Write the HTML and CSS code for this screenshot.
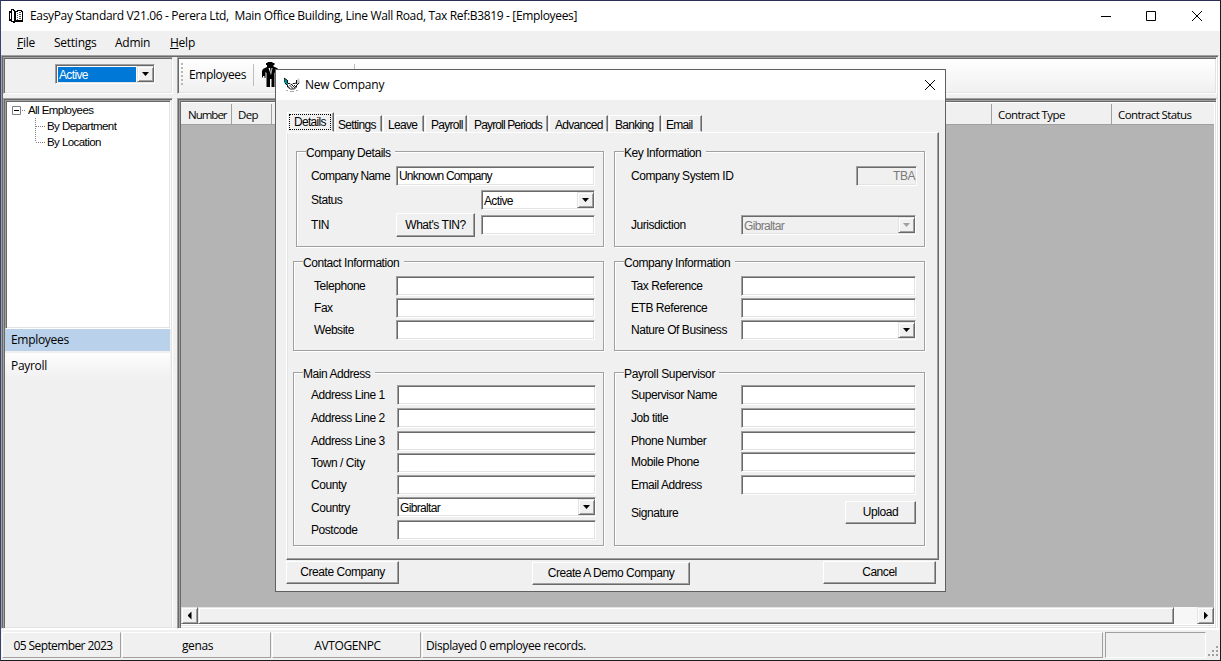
FILE: index.html
```html
<!DOCTYPE html>
<html lang="en">
<head>
<meta charset="utf-8">
<title>EasyPay Standard</title>
<link rel="stylesheet" href="styles.css">
</head>
<body>
<div class="app">
  <header class="titlebar">
    <svg class="app-icon" width="16" height="16" viewBox="0 0 16 16" fill="none" stroke="#000" shape-rendering="crispEdges"><path d="M1 3h2v10H1z" fill="#000" stroke="none"/><path d="M2 5h1v6H2z" fill="#fff" stroke="none"/><path d="M3.500 1.500h2v1h1v12h-1v-1h-2zM7.500 3.500h2v-1h4v1h1v9h-7z"/><path d="M7 13h8v1H7zM14 4h1v10h-1z" fill="#000" stroke="none"/><path d="M9 5.500h1M11 4.500h2M9 7.500h1M11 6.500h2M9 9.500h1M11 8.500h2M9 11.500h1M11 10.500h2" stroke="#555"/></svg>
    <span class="title-text">EasyPay Standard V21.06 - Perera Ltd,&nbsp; Main Office Building, Line Wall Road, Tax Ref:B3819 - [Employees]</span>
    <svg class="win-min" width="12" height="12" viewBox="0 0 12 12" stroke="#000" fill="none"><path d="M1 6.500h10"/></svg>
    <svg class="win-max" width="12" height="12" viewBox="0 0 12 12" stroke="#000" fill="none"><path d="M1.500 1.500h9v9h-9z"/></svg>
    <svg class="win-close" width="12" height="12" viewBox="0 0 12 12" stroke="#000" fill="none"><path d="M1 1l10 10M11 1L1 11"/></svg>
  </header>
  <nav class="menu"><span class="m1"><u>F</u>ile</span><span class="m2">Settings</span><span class="m3">Admin</span><span class="m4"><u>H</u>elp</span></nav>
  <main class="frame">
    <section class="pane filter"><div class="select filter-select"><span class="chosen">Active</span><i class="drop"></i></div></section>
    <section class="pane toolbar">
      <i class="grip"></i><span class="tool-label">Employees</span><i class="tsep"></i>
      <svg class="person" width="18" height="26" viewBox="0 0 18 26"><path d="M5.500 0h5v1h2v2h-1v1.500L15 6l2 2v7l-2 2h-1l-.5-7-1 1v14h-3v-8H8v8H4.500V11l-1-1v6H1L0 15V9l1-2 4-2V3H4V1h1.500z" fill="#000"/><path d="M6.500 6h4L9 13zM1 14h1.500v2H1zM14.500 14H16v2h-1.500z" fill="#fff"/><path d="M8 6h1.500L9 12z" fill="#000"/></svg>
      <i class="tsep second"></i>
    </section>
    <section class="pane nav">
      <div class="tree">
        <div class="node"><svg width="18" height="16" viewBox="0 0 18 16" fill="none"><path d="M2.500 4.500h8v8h-8z" stroke="#808080" fill="#fff"/><path d="M4 8.500h5" stroke="#000"/><path d="M12 8.500h4" stroke="#808080" stroke-dasharray="1 1"/></svg><span>All Employees</span></div>
        <div class="node child"><svg width="13" height="16" viewBox="0 0 13 16"><path d="M1.500 0v16M2 8.500h9" stroke="#808080" stroke-dasharray="1 1"/></svg><span>By Department</span></div>
        <div class="node child"><svg width="13" height="16" viewBox="0 0 13 16"><path d="M1.500 0v8M2 8.500h9" stroke="#808080" stroke-dasharray="1 1"/></svg><span>By Location</span></div>
      </div>
      <div class="nav-item active">Employees</div>
      <div class="nav-item plain">Payroll</div>
    </section>
    <section class="pane list">
      <div class="thead"><span class="c-num">Number</span><span class="c-dep">Dep</span><span class="c-mid"></span><span class="c-type">Contract Type</span><span class="c-status">Contract Status</span></div>
      <div class="scroll"><i class="arrow"></i><i class="thumb"></i><i class="track"></i><i class="arrow next"></i></div>
    </section>
  </main>
  <footer class="status"><span class="s1">05 September 2023</span><span class="s2">genas</span><span class="s3">AVTOGENPC</span><span class="s4">Displayed 0 employee records.</span><span class="s5"></span>
    <svg width="12" height="12" viewBox="0 0 12 12" fill="#a0a0a0"><path d="M8 1h2v2H8zM4 5h2v2H4zM8 5h2v2H8zM0 9h2v2H0zM4 9h2v2H4zM8 9h2v2H8z"/></svg>
  </footer>
</div>

<div class="dialog">
  <div class="dlg-title">
    <svg class="shake" width="16" height="16" viewBox="0 0 16 16"><path d="M0 1l4 3v4L2 8 0 5z" fill="#009090"/><path d="M12 4l3-3 1 5-3 2z" fill="#c8c8c8"/><path d="M0 1v4M1 6l2 2M0 1l3 2M3.500 3v3M4 6.500h2l1 1h1l1-1h2l1.500-1M12.500 3v4M4.500 9.500l1 1M5.500 8l3.500 3.500M8 8l3 3M10 8l2 2M3.500 8v2l3 2h4l2-2V8M13 8l2-2" fill="none" stroke="#000" stroke-width=".9"/><path d="M2 13.500h2M12 13.500h2M6 14.500h4" stroke="#aaa"/></svg>
    <span>New Company</span>
    <svg class="dlg-close" width="12" height="12" viewBox="0 0 12 12" stroke="#000" fill="none"><path d="M1 1l10 10M11 1L1 11"/></svg>
  </div>
  <div class="tabs"><span class="tab current"><b>Details</b></span><span class="tab t2">Settings</span><span class="tab t3">Leave</span><span class="tab t4">Payroll</span><span class="tab t5">Payroll Periods</span><span class="tab t6">Advanced</span><span class="tab t7">Banking</span><span class="tab t8">Email</span></div>
  <div class="sheet">
    <div class="col">
      <div class="group details"><div class="legend w98">Company Details</div>
        <div class="row"><label class="tight">Company Name</label><div class="field">Unknown Company</div></div>
        <div class="row g4"><label>Status</label><div class="select short"><span>Active</span><i class="drop"></i></div></div>
        <div class="row g5"><label>TIN</label><div class="btn tin">What's TIN?</div><div class="field short"></div></div>
      </div>
      <div class="group contact"><div class="legend w106">Contact Information</div>
        <div class="row"><label>Telephone</label><div class="field"></div></div>
        <div class="row g2"><label>Fax</label><div class="field"></div></div>
        <div class="row g2"><label>Website</label><div class="field"></div></div>
      </div>
      <div class="group address"><div class="legend w76">Main Address</div>
        <div class="row"><label>Address Line 1</label><div class="field"></div></div>
        <div class="row g3"><label>Address Line 2</label><div class="field"></div></div>
        <div class="row g3"><label>Address Line 3</label><div class="field"></div></div>
        <div class="row g2"><label>Town / City</label><div class="field"></div></div>
        <div class="row g2"><label>County</label><div class="field"></div></div>
        <div class="row g2"><label class="low">Country</label><div class="select"><span>Gibraltar</span><i class="drop"></i></div></div>
        <div class="row g3"><label>Postcode</label><div class="field"></div></div>
      </div>
    </div>
    <div class="col right">
      <div class="group key"><div class="legend w84">Key Information</div>
        <div class="row"><label>Company System ID</label><div class="field off tba">TBA</div></div>
        <div class="row g29"><label>Jurisdiction</label><div class="select off"><span>Gibraltar</span><i class="drop"></i></div></div>
      </div>
      <div class="group company"><div class="legend w112">Company Information</div>
        <div class="row"><label>Tax Reference</label><div class="field"></div></div>
        <div class="row g2"><label>ETB Reference</label><div class="field"></div></div>
        <div class="row g2"><label>Nature Of Business</label><div class="select"><i class="drop"></i></div></div>
      </div>
      <div class="group supervisor"><div class="legend w95">Payroll Supervisor</div>
        <div class="row"><label>Supervisor Name</label><div class="field"></div></div>
        <div class="row g3"><label>Job title</label><div class="field"></div></div>
        <div class="row g3"><label>Phone Number</label><div class="field"></div></div>
        <div class="row g1"><label>Mobile Phone</label><div class="field"></div></div>
        <div class="row g3"><label>Email Address</label><div class="field"></div></div>
        <div class="row g8"><label>Signature</label><div class="btn upload">Upload</div></div>
      </div>
    </div>
  </div>
  <div class="actions"><div class="btn create">Create Company</div><div class="btn demo">Create A Demo Company</div><div class="btn cancel">Cancel</div></div>
</div>
</body>
</html>
```
FILE: styles.css
```css
* { box-sizing: border-box; }
body {
  margin: 0; width: 1221px; height: 661px; overflow: hidden; position: relative;
  font: 12px/16px "Liberation Sans", Arial, sans-serif; letter-spacing: -0.45px; color: #000; white-space: nowrap;
}
i { display: block; font-style: normal; }
svg { display: block; flex: none; }

/* Main window */
.app {
  width: 1221px; height: 661px; background: #f0f0f0; border: 1px solid #1c1c1c; border-top-color: #28305a;
  border-left-color: #39446e; display: flex; flex-direction: column;
}
.titlebar, .menu, .tool-label, .nav-item, .status, .thead, .dlg-title {
  font-family: "Open Sans", "Noto Sans", sans-serif; letter-spacing: -0.25px;
}
.titlebar { height: 30px; flex: none; background: #fff; display: flex; align-items: center; padding-left: 7px; letter-spacing: -0.34px; }
.title-text { margin-left: 6px; width: 1070px; flex: none; }
.win-max { margin-left: 33px; }
.win-close { margin-left: 34px; }
.menu { height: 24px; flex: none; display: flex; align-items: center; padding-left: 16px; }
.menu span { flex: none; }
.m1 { width: 37px; } .m2 { width: 61px; } .m3 { width: 55px; }
.frame, .pane, .tree, .select, .field {
  border: 1px solid; border-color: #a0a0a0 #fff #fff #a0a0a0;
  box-shadow: inset 1px 1px #696969, inset -1px -1px #e3e3e3;
}
.frame {
  width: 1218px; height: 574px; flex: none; padding: 1px;
  display: grid; grid-template: 37px 531px / 170px 1040px; gap: 4px; align-content: start;
}
.pane { padding: 1px; }
.filter { padding: 6px 0 0 51px; }
.select, .field { height: 20px; width: 199px; flex: none; background: #fff; padding: 1px 1px 1px 2px; display: flex; align-items: center; }
.field { letter-spacing: -0.8px; }
.select { padding: 1px 0 1px 2px; letter-spacing: -0.65px; }
.select span { flex: 1; padding-top: 1px; }
.drop {
  width: 17px; height: 16px; margin-left: auto; flex: none; background: #f0f0f0; border: 1px solid; border-color: #e3e3e3 #696969 #696969 #e3e3e3;
  box-shadow: inset 1px 1px #fff, inset -1px -1px #a0a0a0; display: grid; place-items: center;
}
.drop::before { content: ""; width: 7px; height: 4px; background: #000; clip-path: polygon(0 0, 100% 0, 50% 100%); }
.filter-select { width: 100px; }
.filter-select .chosen { background: #0078d7; color: #fff; height: 15px; line-height: 15px; padding-left: 1px; margin-right: 1px; }
.toolbar { background: linear-gradient(#fff, #f0f0f0); display: flex; align-items: center; padding: 0 0 2px 3px; }
.grip { width: 2px; height: 23px; background: repeating-linear-gradient(#b8b8b8 0 2px, transparent 2px 4px); }
.tool-label { margin-left: 6px; width: 64px; letter-spacing: -.4px; }
.tsep { width: 1px; height: 22px; background: #bdbdbd; }
.person { margin-left: 8px; }
.second { margin-left: 74px; }

/* Left navigation */
.nav { display: flex; flex-direction: column; }
.tree { height: 229px; flex: none; background: #fff; padding: 1px 1px 1px 4px; font-size: 11.5px; letter-spacing: -.57px; }
.node { height: 16px; display: flex; align-items: center; }
.child { padding-left: 24px; }
.nav-item { height: 22px; flex: none; margin-right: 1px; padding: 3px 0 0 6px; letter-spacing: -.3px; }
.active { background: #b9d1ea; }
.plain { height: 26px; margin-top: 2px; padding-top: 5px; background: linear-gradient(#fdfdfd, #f0f0f0); }

/* Employee list */
.list {
  background: #b4b4b4; padding: 3px 2px 4px 3px; display: flex; flex-direction: column; justify-content: space-between;
  box-shadow: inset 1px 1px #696969, inset 2px 2px #a0a0a0, inset 3px 3px #696969,
    inset -1px -1px #e3e3e3, inset -2px -2px #fff, inset -2px -3px #e3e3e3, inset -2px -4px #fff;
}
.thead { display: flex; height: 23px; background: #f0f0f0; border-top: 1px solid #fff; border-bottom: 1px solid #a0a0a0; font-size: 11.5px; letter-spacing: -.6px; }
.thead span { height: 20px; margin-top: 1px; line-height: 22px; border-right: 1px solid #a0a0a0; padding-left: 6px; flex: none; }
.c-num { width: 51px; } .c-dep { width: 40px; } .c-mid { width: 720px; } .c-type { width: 120px; }
.thead .c-num { letter-spacing: -1px; padding-left: 7px; }
.thead .c-status { border: 0; }
.scroll { display: flex; height: 17px; background: #f7f7f7; }
.arrow, .thumb { flex: none; border: 1px solid; border-color: #e3e3e3 #696969 #696969 #e3e3e3; box-shadow: inset 1px 1px #fff, inset -1px -1px #a0a0a0; background: #f0f0f0; }
.arrow { width: 17px; display: grid; place-items: center; }
.thumb { width: 976px; }
.track { flex: 1; }
.arrow::before { content: ""; width: 4px; height: 8px; background: #000; clip-path: polygon(100% 0, 100% 100%, 0 50%); }
.next::before { transform: scaleX(-1); }

.status { height: 29px; flex: none; display: flex; padding: 2px 0 0 1px; border-top: 1px solid #fff; gap: 1px; letter-spacing: -.4px; }
.status span { height: 26px; line-height: 26px; text-align: center; border: 1px solid; border-color: #fff #a0a0a0 #a0a0a0 #fff; flex: none; }
.s1 { width: 119px; letter-spacing: -.6px; padding-left: 3px; } .s2, .s3 { width: 149px; padding-left: 2px; }
.status .s4 { width: 681px; text-align: left; padding-left: 3px; }
.status .s5 { width: 101px; margin-left: 1px; border-color: #a0a0a0 #fff #fff #a0a0a0; }
.status svg { margin: 13px 0 0 1px; }

/* New Company dialog */
.dialog { position: absolute; left: 275px; top: 69px; width: 671px; height: 523px; border: 1px solid #606060; background: #f0f0f0; }
.dlg-title { height: 30px; background: #fff; display: flex; align-items: center; padding: 0 9px 0 8px; letter-spacing: -.2px; }
.dlg-title span { margin-left: 5px; }
.dlg-close { margin-left: auto; }
.tabs { display: flex; height: 32px; align-items: flex-end; padding-left: 11px; letter-spacing: -.7px; }
.tab { height: 17px; line-height: 18px; border: 1px solid; border-color: #fff #696969 transparent #fff; box-shadow: inset -1px 0 #a0a0a0; margin-left: 1px; padding-left: 4px; flex: none; }
.current { height: 20px; width: 47px; margin-left: 0; padding: 1px 0 0 1px; border-color: #fff #696969 #f0f0f0 #fff; }
.tab b { display: block; font-weight: 400; width: 42px; height: 16px; line-height: 15px; padding-left: 4px; border: 1px dotted #000; }
.t2 { width: 47px; padding-left: 2px; } .t3 { width: 41px; } .t4 { width: 42px; padding-left: 5px; } .t5 { width: 80px; letter-spacing: -.85px; padding-left: 5px; }
.t6 { width: 59px; padding-left: 5px; } .t7 { width: 52px; padding-left: 5px; } .t8 { width: 40px; padding-left: 3px; }
.sheet { margin-left: 10px; width: 653px; height: 428px; border: 1px solid; border-color: #fff #696969 #696969 #fff; box-shadow: inset -1px -1px #a0a0a0, inset 1px 0 #e3e3e3; padding: 18px 0 0 6px; display: flex; }
.col { width: 321px; flex: none; }
.group { width: 311px; border: 1px solid #a0a0a0; box-shadow: 1px 1px #fff, inset 1px 1px #fff; }
.details { width: 308px; margin-left: 3px; height: 96px; }
.contact, .company { height: 90px; margin-top: 14px; }
.address, .supervisor { height: 174px; margin-top: 21px; }
.key { height: 96px; }
.legend { margin: -7px 0 5px 9px; height: 16px; background: #f0f0f0; line-height: 17px; }
.address .legend, .supervisor .legend { margin-bottom: 3px; }
.w76 { width: 72px; } .w84 { width: 82px; } .w95 { width: 95px; } .w98 { width: 89px; } .w106 { width: 101px; } .w112 { width: 111px; }
.supervisor .legend { letter-spacing: -.35px; }
.row { height: 20px; display: flex; align-items: center; padding-left: 17px; }
.details .row { padding-left: 14px; }
.contact .row { padding-left: 20px; }
.row label { width: 86px; flex: none; }
.row .tight { letter-spacing: -.65px; }
.low { padding-top: 2px; }
.details label { width: 85px; }
.contact label { width: 82px; }
.right label { width: 110px; }
.right .row { padding-left: 16px; }
.right .field, .right .select { width: 175px; }
.details .short { width: 114px; margin-left: auto; margin-right: 8px; }
.right .tba { width: 61px; margin-left: 115px; justify-content: flex-end; letter-spacing: -.45px; }
.row .off { background: #f0f0f0; color: #7a7a7a; }
.off .drop::before { background: #a0a0a0; }
.g1 { margin-top: 1px; } .g2 { margin-top: 2px; } .g3 { margin-top: 3px; } .g4 { margin-top: 4px; } .g5 { margin-top: 5px; }
.g8 { margin-top: 8px; } .g29 { margin-top: 29px; }
.btn { height: 24px; flex: none; border: 1px solid; border-color: #fff #696969 #696969 #fff; box-shadow: inset -1px -1px #a0a0a0; text-align: center; line-height: 22px; }
.tin { width: 79px; }
.upload { width: 71px; height: 23px; margin-left: 104px; margin-top: -2px; line-height: 21px; }
.actions { display: flex; padding: 1px 0 0 10px; }
.actions .btn { height: 23px; line-height: 21px; }
.create, .cancel { width: 113px; }
.demo { width: 158px; margin: 1px 133px 0 133px; }
```
